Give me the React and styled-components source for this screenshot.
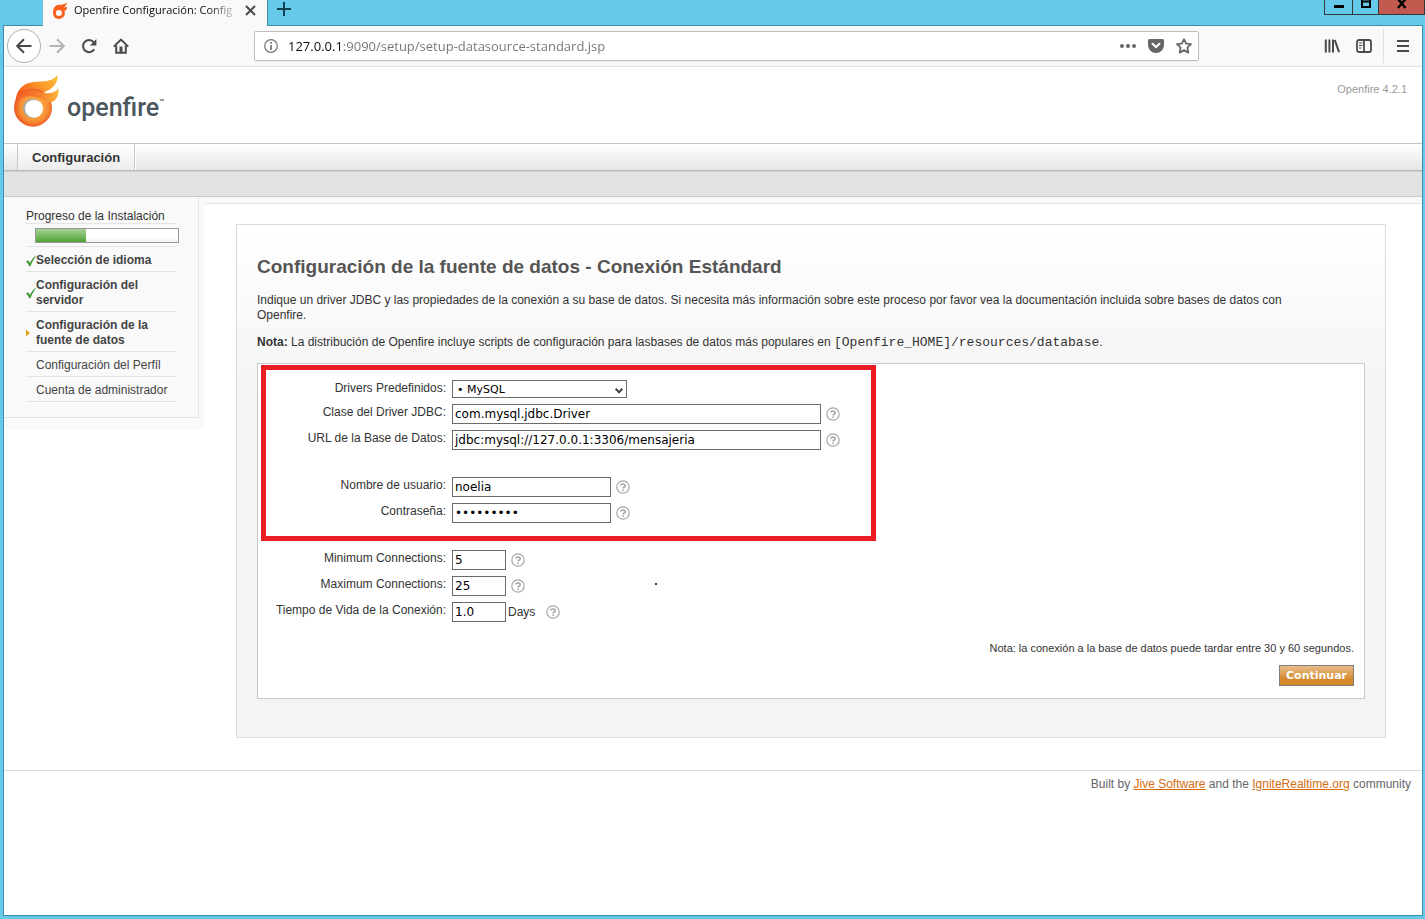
import React from "react";
import styled, { createGlobalStyle, css } from "styled-components";

const arial = `"Liberation Sans", Arial, sans-serif`;
const verdana = `"DejaVu Sans", Verdana, sans-serif`;
const chromeFont = `"Open Sans", "Segoe UI", sans-serif`;

const Global = createGlobalStyle`
  *, *::before, *::after { box-sizing: border-box; }
  body { margin: 0; background: #65c9ea; font: 12px/15px ${arial}; color: #333; }
  button, input, select { margin: 0; border-radius: 0; }
  svg { display: block; flex: none; }
`;

/* ---------- browser window ---------- */

const Desktop = styled.div`
  min-height: 100vh;
  display: flex;
  flex-direction: column;
  padding: 0 2px 3px 3px;
`;

const TitleBar = styled.div`
  position: relative;
  z-index: 1;
  height: 26px;
  display: flex;
  align-items: flex-start;
  padding-left: 40px;
  margin-bottom: -1px;
`;

const BrowserTab = styled.div`
  width: 225px;
  height: 26px;
  padding: 0 10px 6px 9px;
  display: flex;
  align-items: center;
  background: #f9f9fa;
  border-right: 1px solid #3f8ea6;
  color: #0c0c0d;
  font: 11px/16px ${chromeFont};
`;

const TabTitle = styled.span`
  flex: 1;
  white-space: nowrap;
  margin: 0 4px 0 6px;
  mask-image: linear-gradient(to right, #000 calc(100% - 32px), transparent);
`;

const IconButton = styled.button`
  width: ${(p) => p.$w || 32}px;
  height: ${(p) => p.$h || 32}px;
  padding: 0;
  border: 0;
  background: none;
  display: flex;
  align-items: center;
  justify-content: center;
  color: ${(p) => p.$color || "#4a4a4b"};
`;

const WindowButtons = styled.div`
  position: absolute;
  top: 0;
  right: -2px;
  display: flex;
  border: solid #33373a;
  border-width: 0 0 1px 1px;
`;

const WindowButton = styled.button`
  width: ${(p) => p.$w}px;
  height: 14px;
  padding: 0;
  border: 0;
  border-right: 1px solid #33373a;
  background: ${(p) => (p.$close ? "#c25a50" : "#65c9ea")};
  display: flex;
  justify-content: center;
`;

const Window = styled.div`
  flex: 1;
  display: flex;
  flex-direction: column;
  border: 1px solid #3f8ea6;
  background: #fff;
`;

const Toolbar = styled.div`
  height: 41px;
  display: flex;
  align-items: center;
  background: #f9f9fa;
  border-bottom: 1px solid #e0e0e1;
  padding: 0 3px;
`;

const BackButton = styled(IconButton)`
  border: 1px solid #b1b1b2;
  border-radius: 50%;
  background: #fff;
`;

const UrlBar = styled.div`
  flex: 1;
  height: 30px;
  margin: 0 117px;
  display: flex;
  align-items: center;
  padding: 0 0 0 9px;
  background: #fff;
  border: 1px solid #bfbfc0;
  border-radius: 2px;
  box-shadow: 0 1px 3px rgba(0, 0, 0, 0.05);
`;

const UrlInput = styled.input`
  flex: 1;
  min-width: 0;
  height: 20px;
  margin-left: 10px;
  padding: 0;
  border: 0;
  outline: 0;
  font: 13px/20px ${chromeFont};
  color: transparent;
  background: linear-gradient(to right, #0c0c0d 55px, #737373 55px);
  background-clip: text;
  -webkit-background-clip: text;
`;

const Divider = styled.span`
  width: 1px;
  height: 34px;
  margin: 0 3px;
  background: #e0e0e1;
`;

/* ---------- Openfire page ---------- */

const Header = styled.header`
  height: 76px;
  display: flex;
  justify-content: space-between;
  padding: 8px 15px 0 10px;
`;

const Brand = styled.div`
  display: flex;
  align-items: flex-start;
  color: #4b575c;
  font: 500 25px/30px Roboto, sans-serif;
`;

const BrandName = styled.span`
  padding-top: 18px;
  margin-left: 8px;
`;

const Trademark = styled.span`
  padding-top: 22px;
  font-size: 8px;
  line-height: 12px;
`;

const Version = styled.span`
  padding-top: 7px;
  font-size: 11px;
  color: #999;
`;

const NavBar = styled.nav`
  height: 28px;
  display: flex;
  padding-left: 13px;
  border-top: 1px solid #c4c4c4;
  border-bottom: 1px solid #b9b9b9;
  background: linear-gradient(#fff, #e6e6e6);
`;

const NavTab = styled.a`
  padding: 0 14px;
  border: solid #c8c8c8;
  border-width: 0 1px;
  background: linear-gradient(#fff, #ececec);
  box-shadow: 1px 0 #fff;
  font-size: 13px;
  line-height: 27px;
  font-weight: bold;
  color: #333;
  text-decoration: none;
`;

const SubNav = styled.div`
  height: 26px;
  background: #e3e3e3;
  border-top: 1px solid #d0d0d0;
  border-bottom: 1px solid #c8c8c8;
`;

const Columns = styled.div`
  display: flex;
  align-items: flex-start;
`;

const Sidebar = styled.aside`
  width: 200px;
  flex: none;
  background: #f9f9f9;
  padding: 1px 5px 12px 0;
`;

const SidebarInner = styled.div`
  border: solid #e4e4e4;
  border-width: 0 1px 1px 0;
  padding: 11px 22px 15px;
`;

const SideTitle = styled.div`
  width: 150px;
  line-height: 14px;
  white-space: nowrap;
  border-bottom: 1px solid #e4e4e4;
`;

const ProgressRow = styled.div`
  width: 150px;
  padding: 4px 0 3px 9px;
  border-bottom: 1px solid #e4e4e4;
`;

const ProgressTrack = styled.div`
  width: 144px;
  height: 15px;
  border: 1px solid #999;
  background: linear-gradient(#fff 60%, #f0f0f0);
`;

const ProgressFill = styled.div`
  height: 13px;
  background: linear-gradient(#a5d295, #52a336);
`;

const Steps = styled.ul`
  width: 150px;
  margin: 0;
  padding: 0;
  list-style: none;
`;

const Step = styled.li`
  display: flex;
  align-items: center;
  padding: 6px 0 3px;
  border-bottom: 1px solid #e4e4e4;
  color: #444;
  font-weight: ${(p) => (p.$bold ? "bold" : "normal")};
`;

const StepMark = styled.span`
  width: 10px;
  flex: none;
  svg { overflow: visible; }
`;

const MainShade = styled.div`
  flex: 1;
  min-width: 0;
  padding-top: 6px;
  background: linear-gradient(#f9f9f9 12px, #fff 12px);
`;

const Main = styled.main`
  padding: 20px 36px 32px 32px;
  border-top: 1px solid #e4e4e4;
  border-top-left-radius: 4px;
  background: #fff;
`;

const Card = styled.section`
  padding: 20px 20px 38px;
  border: 1px solid #dcdcdc;
  background: linear-gradient(#fff, #f4f4f4 170px);
`;

const Title = styled.h1`
  margin: 11px 0 15px;
  font-size: 19px;
  line-height: 22px;
  color: #555;
`;

const Paragraph = styled.p`
  margin: 0 0 12px;
`;

const Code = styled.code`
  font: 13px/15px "Liberation Mono", "Courier New", monospace;
`;

const Panel = styled.form`
  position: relative;
  margin-top: 13px;
  padding: 16px 10px 12px 14px;
  border: 1px solid #c8c8c8;
  background: #fff;
`;

const Highlight = styled.div`
  position: absolute;
  top: 1px;
  left: 3px;
  width: 615px;
  height: 176px;
  border: 5px solid #ed1c24;
  pointer-events: none;
`;

const Speck = styled.span`
  position: absolute;
  top: 219px;
  left: 397px;
  width: 2px;
  height: 2px;
  background: #333;
`;

const Group = styled.div`
  display: grid;
  gap: 6px;
  margin-bottom: 27px;
`;

const Row = styled.div`
  display: grid;
  grid-template-columns: 174px 1fr;
  gap: 6px;
`;

const Label = styled.label`
  padding-top: 1px;
  text-align: right;
  white-space: nowrap;
`;

const Controls = styled.div`
  display: flex;
  align-items: center;
`;

const fieldStyle = css`
  border: 1px solid #6b6b6b;
  background: #fff;
  color: #000;
  outline: 0;
`;

const Field = styled.input`
  ${fieldStyle}
  width: ${(p) => p.$w}px;
  height: 20px;
  padding: 0 2px;
  font: 12px/16px ${verdana};
`;

const SelectWrap = styled.span`
  position: relative;
  display: flex;
  > svg { position: absolute; right: 4px; top: 8px; pointer-events: none; }
`;

const Select = styled.select`
  ${fieldStyle}
  appearance: none;
  width: 175px;
  height: 18px;
  padding: 1px 4px 0;
  font: 11px/15px ${verdana};
`;

const Unit = styled.span`
  padding: 0 6px 0 2px;
`;

const HelpButton = styled(IconButton)`
  margin-left: 5px;
`;

const PanelFooter = styled.div`
  display: flex;
  flex-direction: column;
  align-items: flex-end;
  gap: 9px;
  font-size: 11px;
  margin-top: -8px;
`;

const Submit = styled.button`
  width: 75px;
  height: 21px;
  padding: 0;
  border: 1px solid #7d7d7d;
  background: linear-gradient(#e8bd8c, #d5892c 70%);
  color: #fff;
  font: bold 11px/16px ${verdana};
`;

const Footer = styled.footer`
  border-top: 1px solid #dcdcdc;
  padding: 6px 11px;
  text-align: right;
  color: #666;
`;

const FooterLink = styled.a`
  color: #d76c0e;
`;

/* ---------- drawings ---------- */

const Svg = ({ w = 16, h = w, box = `0 0 ${w} ${h}`, children, ...rest }) => (
  <svg width={w} height={h} viewBox={box} fill="none" stroke="currentColor" strokeWidth="2" aria-hidden="true" {...rest}>
    {children}
  </svg>
);

const OpenfireLogo = () => (
  <svg width="45" height="52" viewBox="41 26 135 156" aria-hidden="true">
    <defs>
      <linearGradient id="tail" x1="0" x2="1" y1="0.6" y2="0">
        <stop offset="0" stopColor="#f4571d" />
        <stop offset="0.5" stopColor="#fb9328" />
        <stop offset="1" stopColor="#fdc23a" />
      </linearGradient>
      <radialGradient id="ring" cx="101" cy="124" r="62" gradientUnits="userSpaceOnUse">
        <stop offset="0.4" stopColor="#fbab43" />
        <stop offset="0.7" stopColor="#f68a32" />
        <stop offset="1" stopColor="#ec4c20" />
      </radialGradient>
      <linearGradient id="lick" x1="0" x2="1">
        <stop offset="0" stopColor="#f15a22" />
        <stop offset="0.55" stopColor="#f57f2b" />
        <stop offset="1" stopColor="#fcb53a" />
      </linearGradient>
    </defs>
    <path d="M45 112C46 78 60 56 88 49C118 43 152 51 171 26C174 48 160 66 135 76C108 77 66 82 45 112Z" fill="url(#tail)" />
    <circle cx="98" cy="124" r="57" fill="url(#ring)" />
    <path d="M46 108C57 79 84 72 113 77C139 84 161 82 174 67C177 94 161 113 139 108C108 83 68 82 46 108Z" fill="url(#lick)" />
    <circle cx="97" cy="126" r="29" fill="#a9a9a6" />
    <circle cx="101" cy="127" r="27" fill="#fff" />
  </svg>
);

const Favicon = () => (
  <svg width="16" height="17" viewBox="40 20 137 162" aria-hidden="true">
    <path fillRule="evenodd" fill="#f9601a" d="M42 124C42 70 70 50 100 47C130 44 155 42 171 24C174 44 164 58 145 68C160 72 170 70 176 66C176 92 164 106 150 104C166 140 142 181 98 181C64 181 42 156 42 124ZM98 96A29 29 0 1 0 98 154A29 29 0 1 0 98 96Z" />
  </svg>
);

const HelpIcon = () => (
  <Svg w={14} stroke="#a6a6a6" strokeWidth="1.2">
    <circle cx="7" cy="7" r="6.2" />
    <path d="M4.8 5.6C4.8 3.5 9.2 3.5 9.2 5.7C9.2 7 7.1 7 7.1 8.6" strokeWidth="1.6" />
    <path d="M7.1 9.5V11" strokeWidth="1.6" />
  </Svg>
);

const Help = () => (
  <HelpButton type="button" aria-label="Ayuda" $w={14} $h={14}>
    <HelpIcon />
  </HelpButton>
);

const CheckMark = () => (
  <Svg w={11} h={12} stroke="none">
    <path d="M0 6.6L2 5.2L4 7.8C5.8 4.1 8 1.6 10.6 0.2C8 3.6 6 7.1 4.4 11.2H3.2C2.4 9.4 1.4 7.8 0 6.6Z" fill="#3f9a34" />
  </Svg>
);

const CurrentMark = () => (
  <Svg w={4} h={8} stroke="none">
    <path d="M0 0.5L4 4L0 7.5Z" fill="#dba21a" />
  </Svg>
);

const marks = { done: <CheckMark />, current: <CurrentMark /> };

const steps = [
  { text: "Selección de idioma", state: "done" },
  { text: "Configuración del servidor", state: "done" },
  { text: "Configuración de la fuente de datos", state: "current" },
  { text: "Configuración del Perfíl" },
  { text: "Cuenta de administrador" },
];

const FormRow = ({ id, label, unit, ...field }) => (
  <Row>
    <Label htmlFor={id}>{label}</Label>
    <Controls>
      <Field id={id} {...field} />
      {unit && <Unit>{unit}</Unit>}
      <Help />
    </Controls>
  </Row>
);

function BrowserChrome() {
  return (
    <TitleBar>
      <BrowserTab>
        <Favicon />
        <TabTitle>Openfire Configuración: Config</TabTitle>
        <IconButton $w={13} $h={16} aria-label="Cerrar pestaña">
          <Svg w={11}><path d="M1 1L10 10M10 1L1 10" /></Svg>
        </IconButton>
      </BrowserTab>
      <IconButton $w={32} $h={18} $color="#123f50" aria-label="Nueva pestaña">
        <Svg w={14}><path d="M7 0V14M0 7H14" /></Svg>
      </IconButton>
      <WindowButtons>
        <WindowButton $w={28} aria-label="Minimizar">
          <Svg w={10} h={14} stroke="#000" strokeWidth="3"><path d="M0 6.5H10" /></Svg>
        </WindowButton>
        <WindowButton $w={26} aria-label="Maximizar">
          <Svg w={10} h={14} stroke="#000"><path d="M1 -1V7H9V-1M1 1.5H9" /></Svg>
        </WindowButton>
        <WindowButton $w={46} $close aria-label="Cerrar">
          <Svg w={10} h={14} stroke="#000" strokeWidth="2.4"><path d="M1 -1L8.5 8M8.5 -1L1 8" /></Svg>
        </WindowButton>
      </WindowButtons>
    </TitleBar>
  );
}

function BrowserToolbar() {
  return (
    <Toolbar>
      <BackButton $w={34} $h={34} aria-label="Atrás">
        <Svg><path d="M15.5 8H1.5M8 1.2L1.2 8L8 14.8" /></Svg>
      </BackButton>
      <IconButton $color="#b4b4b5" aria-label="Adelante">
        <Svg><path d="M0.5 8H14.5M8 1.2L14.8 8L8 14.8" /></Svg>
      </IconButton>
      <IconButton aria-label="Recargar">
        <Svg>
          <path d="M13.2 11.2A6 6 0 1 1 12.6 4.2" />
          <path d="M15.4 1V7.4H9Z" fill="currentColor" stroke="none" />
        </Svg>
      </IconButton>
      <IconButton aria-label="Inicio">
        <Svg>
          <path d="M0.8 8.6L8 1.6L15.2 8.6" />
          <path d="M3.2 7.5V14.8H12.8V7.5" />
          <path d="M6.5 8.5H9.5V15H6.5Z" fill="currentColor" stroke="none" />
        </Svg>
      </IconButton>
      <UrlBar>
        <Svg w={14} stroke="#737373" strokeWidth="1.2">
          <circle cx="7" cy="7" r="6.3" />
          <path d="M7 6V11M7 3V4.8" strokeWidth="1.7" />
        </Svg>
        <UrlInput aria-label="Dirección" defaultValue="127.0.0.1:9090/setup/setup-datasource-standard.jsp" />
        <IconButton $w={28} $h={28} $color="#666" aria-label="Acciones de página">
          <Svg stroke="none">
            <g fill="currentColor"><circle cx="2" cy="8" r="2" /><circle cx="8" cy="8" r="2" /><circle cx="14" cy="8" r="2" /></g>
          </Svg>
        </IconButton>
        <IconButton $w={28} $h={28} $color="#666" aria-label="Guardar en Pocket">
          <Svg>
            <path d="M1.6 1H14.4A1.6 1.6 0 0 1 16 2.6V7A8 8 0 0 1 0 7V2.6A1.6 1.6 0 0 1 1.6 1Z" fill="currentColor" stroke="none" />
            <path d="M4.6 5.8L8 9.2L11.4 5.8" stroke="#fff" strokeLinecap="round" />
          </Svg>
        </IconButton>
        <IconButton $w={28} $h={28} $color="#666" aria-label="Marcador">
          <Svg strokeWidth="1.8" strokeLinejoin="round">
            <path d="M8 1.2L10.1 5.6L15 6.2L11.4 9.6L12.3 14.6L8 12.1L3.7 14.6L4.6 9.6L1 6.2L5.9 5.6Z" />
          </Svg>
        </IconButton>
      </UrlBar>
      <IconButton aria-label="Biblioteca">
        <Svg><path d="M1.8 1.5V14.5M5.4 1.5V14.5M9 1.5V14.5M10.8 2L15 14.2" /></Svg>
      </IconButton>
      <IconButton aria-label="Barra lateral">
        <Svg strokeWidth="1.8">
          <rect x="1" y="2" width="14" height="12" rx="2" />
          <path d="M8 2V14" />
          <path d="M3 5H6.5M3 7.5H6.5M3 10H5.5" strokeWidth="1" />
        </Svg>
      </IconButton>
      <Divider />
      <IconButton aria-label="Menú">
        <Svg w={12} h={14}><path d="M0 2H12M0 7H12M0 12H12" /></Svg>
      </IconButton>
    </Toolbar>
  );
}

function SetupSidebar() {
  return (
    <Sidebar>
      <SidebarInner>
        <SideTitle>Progreso de la Instalación</SideTitle>
        <ProgressRow>
          <ProgressTrack role="progressbar" aria-valuenow={35} aria-label="Progreso de la Instalación">
            <ProgressFill style={{ width: "35%" }} />
          </ProgressTrack>
        </ProgressRow>
        <Steps>
          {steps.map((s) => (
            <Step key={s.text} $bold={!!s.state}>
              <StepMark>{marks[s.state]}</StepMark>
              <span>{s.text}</span>
            </Step>
          ))}
        </Steps>
      </SidebarInner>
    </Sidebar>
  );
}

function DataSourceForm() {
  return (
    <Panel onSubmit={(e) => e.preventDefault()}>
      <Group>
        <Row>
          <Label htmlFor="preset">Drivers Predefinidos:</Label>
          <Controls>
            <SelectWrap>
              <Select id="preset" defaultValue="mysql">
                <option value="mysql">• MySQL</option>
              </Select>
              <Svg w={8} h={6} stroke="#444"><path d="M0.7 0.7L4 4.2L7.3 0.7" /></Svg>
            </SelectWrap>
          </Controls>
        </Row>
        <FormRow id="driver" label="Clase del Driver JDBC:" $w={369} defaultValue="com.mysql.jdbc.Driver" />
        <FormRow id="url" label="URL de la Base de Datos:" $w={369} defaultValue="jdbc:mysql://127.0.0.1:3306/mensajeria" />
      </Group>
      <Group>
        <FormRow id="user" label="Nombre de usuario:" $w={159} defaultValue="noelia" />
        <FormRow id="pass" label="Contraseña:" $w={159} type="password" defaultValue="123456789" />
      </Group>
      <Group>
        <FormRow id="min" label="Minimum Connections:" $w={54} defaultValue="5" />
        <FormRow id="max" label="Maximum Connections:" $w={54} defaultValue="25" />
        <FormRow id="life" label="Tiempo de Vida de la Conexión:" $w={54} defaultValue="1.0" unit="Days" />
      </Group>
      <PanelFooter>
        <span>Nota: la conexión a la base de datos puede tardar entre 30 y 60 segundos.</span>
        <Submit type="submit">Continuar</Submit>
      </PanelFooter>
      <Speck />
      <Highlight />
    </Panel>
  );
}

export default function App() {
  return (
    <Desktop>
      <Global />
      <BrowserChrome />
      <Window>
        <BrowserToolbar />
        <Header>
          <Brand>
            <OpenfireLogo />
            <BrandName>openfire</BrandName>
            <Trademark>™</Trademark>
          </Brand>
          <Version>Openfire 4.2.1</Version>
        </Header>
        <NavBar>
          <NavTab href="#configuracion">Configuración</NavTab>
        </NavBar>
        <SubNav />
        <Columns>
          <SetupSidebar />
          <MainShade>
            <Main>
              <Card>
                <Title>Configuración de la fuente de datos - Conexión Estándard</Title>
                <Paragraph>
                  Indique un driver JDBC y las propiedades de la conexión a su base de datos. Si necesita más
                  información sobre este proceso por favor vea la documentación incluida sobre bases de datos con
                  <br />
                  Openfire.
                </Paragraph>
                <Paragraph>
                  <b>Nota:</b> La distribución de Openfire incluye scripts de configuración para lasbases de datos más
                  populares en <Code>[Openfire_HOME]/resources/database</Code>.
                </Paragraph>
                <DataSourceForm />
              </Card>
            </Main>
          </MainShade>
        </Columns>
        <Footer>
          Built by <FooterLink href="#jive">Jive Software</FooterLink> and the{" "}
          <FooterLink href="#ignite">IgniteRealtime.org</FooterLink> community
        </Footer>
      </Window>
    </Desktop>
  );
}
